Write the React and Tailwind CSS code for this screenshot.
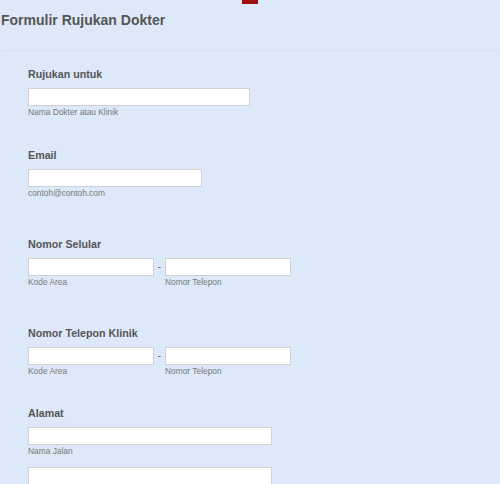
import React from 'react';

const Field = ({ label, sub, width, top }) => (
    <div className={top}>
        <div className="text-[10.7px] leading-[13px] font-bold text-[#555]">{label}</div>
        <input type="text" className={`mt-[7px] block h-[18px] ${width} bg-white border border-[#d0d0d0] outline-none`} />
        <div className="mt-[1px] text-[8.4px] leading-[10px] text-[#777]">{sub}</div>
    </div>
);

const PhoneField = ({ label, top }) => (
    <div className={top}>
        <div className="text-[10.7px] leading-[13px] font-bold text-[#555]">{label}</div>
        <div className="mt-[7px] flex items-start">
            <div>
                <input type="text" className="block h-[18px] w-[126px] bg-white border border-[#d0d0d0] outline-none" />
                <div className="mt-[1px] text-[8.4px] leading-[10px] text-[#777]">Kode Area</div>
            </div>
            <div className="w-[11px] h-[18px] flex items-center justify-center text-[10px] text-[#666]">-</div>
            <div>
                <input type="text" className="block h-[18px] w-[126px] bg-white border border-[#d0d0d0] outline-none" />
                <div className="mt-[1px] text-[8.4px] leading-[10px] text-[#777]">Nomor Telepon</div>
            </div>
        </div>
    </div>
);

export default function App() {
    return (
        <div className="w-[500px] h-[484px] overflow-hidden bg-[#dde9f8] font-['Liberation_Sans',Arial,sans-serif]">
            <div className="mx-auto w-[16px] h-[4px] bg-[#a30f0f]" />
            <h1 className="mt-[7.5px] pl-[1px] text-[14px] leading-[17px] font-bold text-[#555]">Formulir Rujukan Dokter</h1>
            <div className="mx-[3px] mt-[21px] border-b border-dotted border-[#cfd8e4]" />

            <div className="pl-[28px] pt-[17.5px]">
                <Field label="Rujukan untuk" sub="Nama Dokter atau Klinik" width="w-[222px]" />
                <Field label="Email" sub="contoh@contoh.com" width="w-[174px]" top="mt-[31.7px]" />
                <PhoneField label="Nomor Selular" top="mt-[40.3px]" />
                <PhoneField label="Nomor Telepon Klinik" top="mt-[40px]" />
                <Field label="Alamat" sub="Nama Jalan" width="w-[244px]" top="mt-[31.3px]" />
                <input type="text" className="mt-[11px] block h-[18px] w-[244px] bg-white border border-[#d0d0d0] outline-none" />
            </div>
        </div>
    );
}
